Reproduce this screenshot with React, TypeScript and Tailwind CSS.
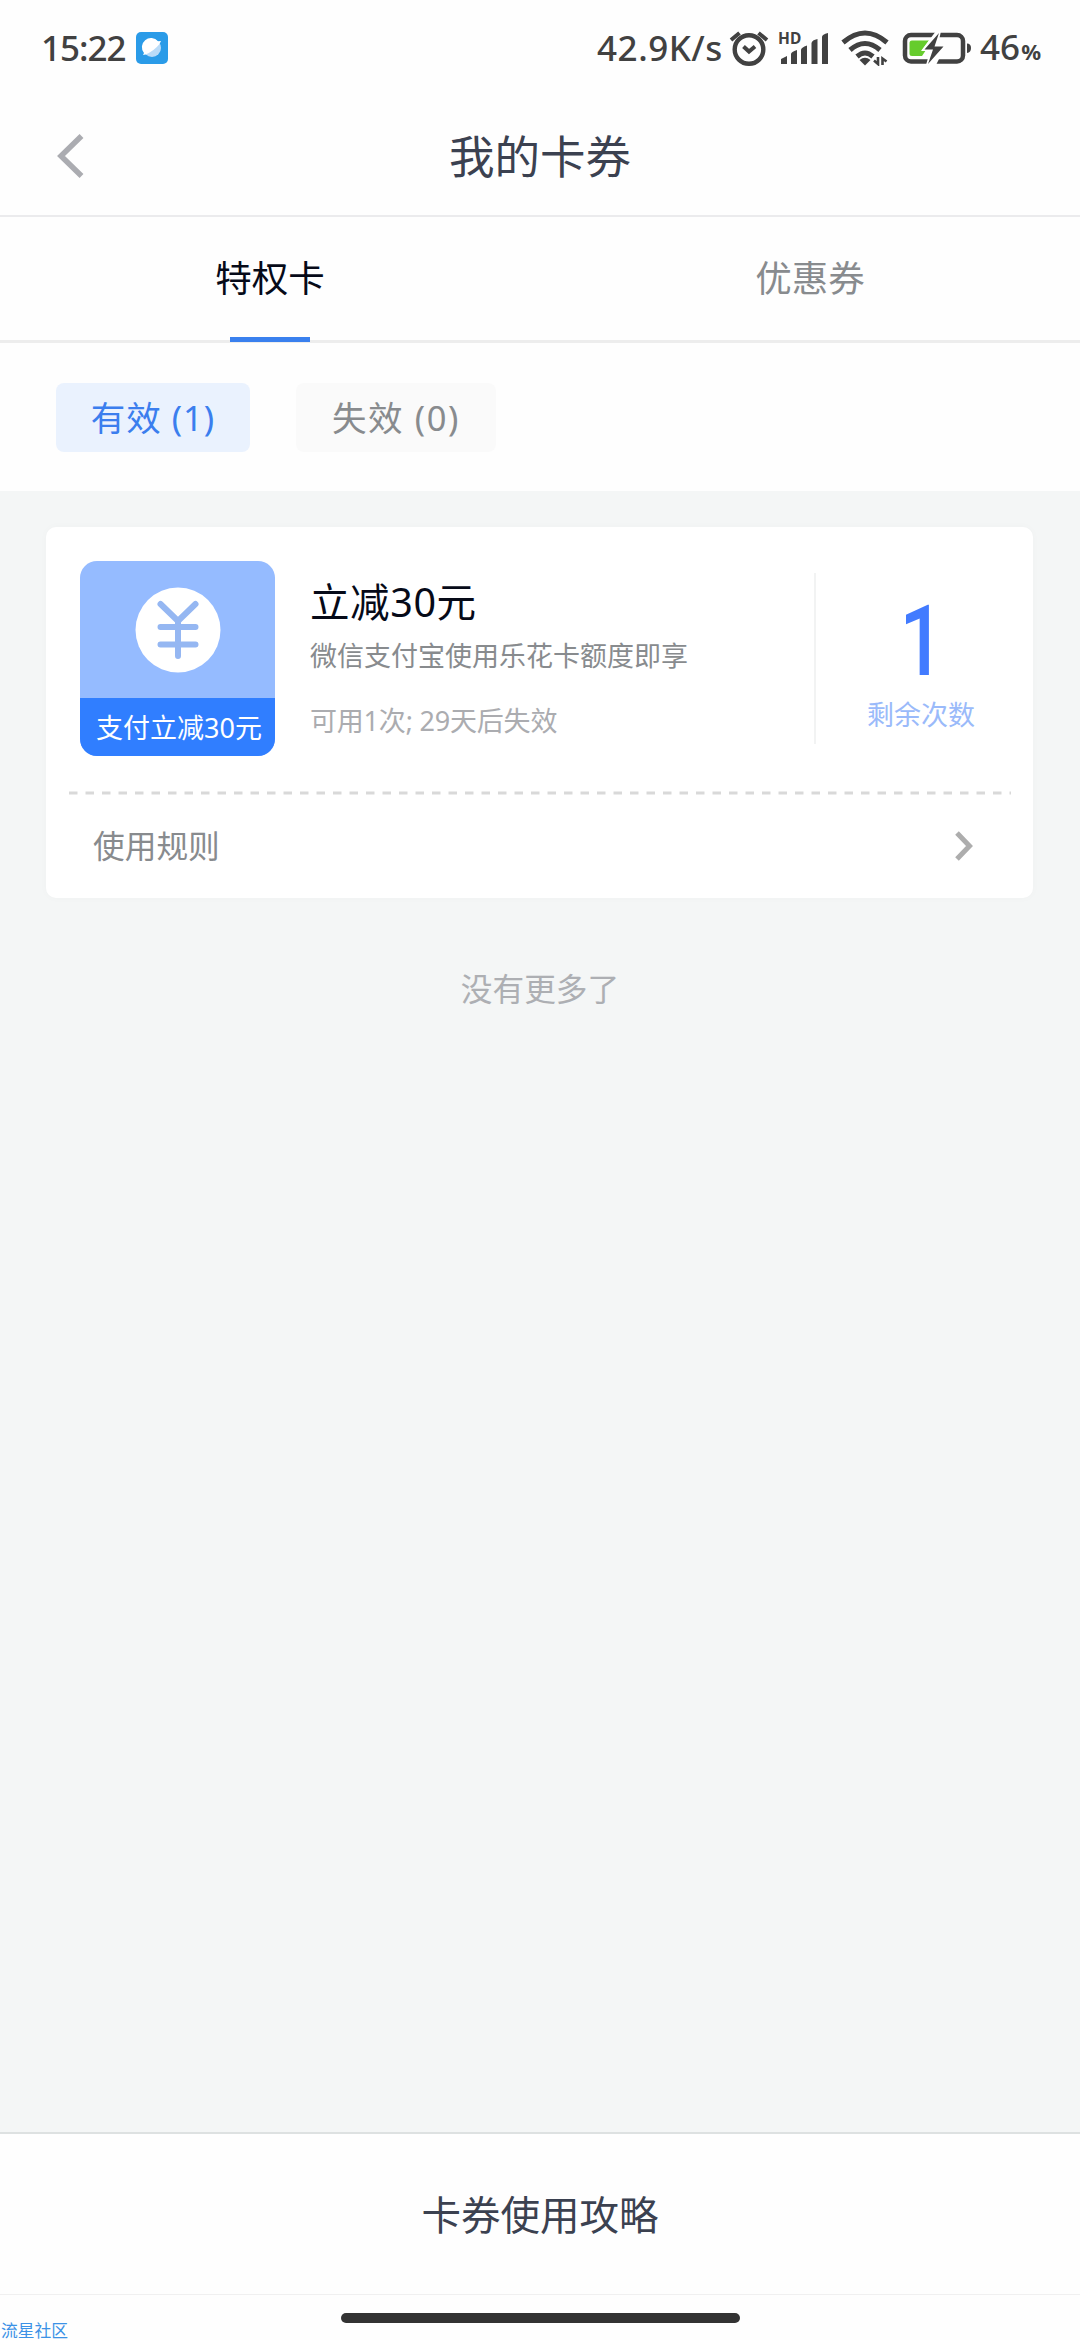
import React from "react";

const cjk = "font-['Noto_Sans','Noto_Sans_CJK_SC',sans-serif]";

function StatusBar() {
  return (
    <div className="flex h-[96px] items-center pl-[41px] pr-[40px] text-[#414141] font-['Noto_Sans',sans-serif] font-medium">
      <span className="w-[95px] whitespace-nowrap text-[35px] leading-[96px] tracking-[-1px]">15:22</span>
      <svg className="size-8 shrink-0" viewBox="0 0 32 32">
        <rect width="32" height="32" rx="5" fill="#2a9be8" />
        <circle cx="16" cy="16" r="9" fill="#b9dbf8" />
        <path d="M8 21A9 9 0 0 1 22 9.300L25 9L23.500 12Q18 19 9.500 22.500L7 23Z" fill="#fff" />
      </svg>
      <div className="ml-auto flex items-center">
        <span className="w-[132px] whitespace-nowrap text-[35px] leading-[98px] tracking-[0.5px]">42.9K/s</span>
        <svg className="h-[38px] w-[40px] shrink-0" viewBox="0 0 40 38" fill="none" stroke="#414141">
          <circle cx="20" cy="20.500" r="14.300" strokeWidth="4.400" />
          <path d="M2 11L10.500 4M38 11L29.500 4" strokeWidth="4" />
          <path d="M14.500 17.500L20 22.500L26 17.500" strokeWidth="4" />
        </svg>
        <div className="relative ml-[9px] h-[34px] w-[52px] shrink-0">
          <svg className="size-full" viewBox="0 0 52 34" fill="#414141">
            <path d="M3 28L9 25V33H3ZM13 23Q13 21 19 19V33H13ZM23 19Q23 16.500 29 14.500V33H23ZM33.500 12Q34 9 39.500 8V33H33.500ZM44 6Q44 3.500 50 2V33H44Z" />
          </svg>
          <span className="absolute -top-[3px] left-0 text-[15.500px] font-bold leading-[20px]">HD</span>
        </div>
        <svg className="ml-[11px] h-[36px] w-[48px] shrink-0" viewBox="0 0 48 36" fill="none" stroke="#414141">
          <path d="M2 12.500Q24 -6.500 46 12.500M9 20Q24 7 39 20M16 26.500Q24 19.500 32 26.500" strokeWidth="5" />
          <path d="M18.500 30Q24 25.500 29.500 30L24 35.500Z" fill="#414141" stroke="none" />
          <path d="M33 30.500L37 34V27M41.500 35V28.500L45.500 31.500" strokeWidth="2.600" />
        </svg>
        <svg className="ml-[13px] h-[34px] w-[70px] shrink-0" viewBox="0 0 70 34">
          <rect x="3" y="4" width="58" height="26.500" rx="6" fill="none" stroke="#414141" strokeWidth="4.500" />
          <path d="M10 9.500H27L20 19H24L20 25H10Q7.500 25 7.500 22.500V12Q7.500 9.500 10 9.500Z" fill="#66cc2d" />
          <path d="M34 0L19 20H28L24 34H34L44 14H36L39 0Z" fill="#fff" />
          <path d="M37 2L22.500 18.500H31L26 33L41.500 15.500H32.500Z" fill="#414141" />
          <path d="M65 12.500Q69 12.500 69 17T65 22Z" fill="#414141" />
        </svg>
        <span className="ml-[8px] whitespace-nowrap pt-[2px] text-[35px] leading-[96px]">
          46<span className="ml-px text-[22px] font-bold tracking-[-1px]">%</span>
        </span>
      </div>
    </div>
  );
}

function Header() {
  return (
    <header className="grid h-[121px] grid-cols-[1fr_auto_1fr] items-center border-b-2 border-[#ebebed]">
      <svg className="ml-[57px] h-[44px] w-[28px]" viewBox="0 0 28 44" fill="none">
        <path d="M24.500 2L4 22L24.500 42" stroke="#abacb1" strokeWidth="5.500" />
      </svg>
      <h1 className="text-[45.500px] leading-[118px] text-[#3b4150]">我的卡券</h1>
    </header>
  );
}

function Tabs() {
  return (
    <nav className="grid h-[126px] grid-cols-2 border-b-[3px] border-[#ededed] text-[36.500px] leading-[122px]">
      <div className="flex flex-col items-center text-[#060a18]">
        <span className="h-[120px]">特权卡</span>
        <span className="h-[5px] w-[80px] shrink-0 bg-[#3a80ee]" />
      </div>
      <div className="text-center text-[#888b8e]">优惠券</div>
    </nav>
  );
}

function Filters() {
  return (
    <div className="flex h-[148px] gap-[46px] pl-[56px] pt-[40px] text-[34.500px] leading-[69px]">
      <button className="h-[69px] w-[194px] rounded-[8px] bg-[#eaf2fe] tracking-[1px] text-[#3b7eee]">有效 (1)</button>
      <button className="h-[69px] w-[200px] rounded-[8px] bg-[#fafafa] tracking-[1.6px] text-[#888b8e]">失效 (0)</button>
    </div>
  );
}

function CouponBadge() {
  return (
    <div className="flex size-[195px] shrink-0 flex-col overflow-hidden rounded-[17px] bg-[#95bbff]">
      <div className="flex h-[137px] shrink-0 items-center justify-center">
        <svg className="size-[86px]" viewBox="0 0 86 86">
          <circle cx="43" cy="43" r="42.500" fill="#fff" />
          <path
            d="M25.500 17L43 34L60.500 17M43 34V69M25.500 40H60.500M25.500 57.500H60.500"
            fill="none"
            stroke="#95b7f2"
            strokeWidth="6"
            strokeLinecap="round"
          />
        </svg>
      </div>
      <div className="h-[58px] shrink-0 whitespace-nowrap bg-[#307eff] pl-[3px] text-center text-[27px] leading-[60px] text-white">支付立减30元</div>
    </div>
  );
}

function CouponCard() {
  return (
    <section className="ml-[46px] h-[371px] w-[987px] rounded-[10px] bg-white shadow-[0_0_8px_rgba(0,0,0,0.025)]">
      <div className="flex h-[264px] pl-[34px] pt-[34px]">
        <CouponBadge />
        <div className="ml-[35px] w-[504px] whitespace-nowrap">
          <div className="mt-[14px] text-[39.500px] leading-[54px] tracking-[0.6px] text-[#060a18]">立减30元</div>
          <div className="mt-[9px] text-[27px] leading-[36px] text-[#888b8e]">微信支付宝使用乐花卡额度即享</div>
          <div className="mt-[29px] text-[27px] leading-[36px] tracking-[-0.2px] text-[#abacb0]">可用1次; 29天后失效</div>
        </div>
        <div className="mt-[12px] h-[171px] w-[2px] bg-[#f2f3f3]" />
        <div className="flex w-[210px] flex-col items-center text-[#427bff]">
          <span className="mt-[31px] h-[98px] translate-x-px scale-x-[0.8] font-['Roboto',sans-serif] text-[98px] font-medium leading-[100px]">1</span>
          <span className="mt-[7px] text-[27px] leading-[36px] text-[#9abafa]">剩余次数</span>
        </div>
      </div>
      <svg className="ml-[23px] block h-[4px] w-[942px]" viewBox="0 0 942 4">
        <path d="M0 2H942" stroke="#d9d9d9" strokeWidth="3" strokeDasharray="8.500 8" />
      </svg>
      <div className="flex h-[101px] items-center justify-between pl-[47px] pr-[59px]">
        <span className="text-[31.700px] leading-[44px] text-[#888b8e]">使用规则</span>
        <svg className="h-[30px] w-[20px]" viewBox="0 0 20 30" fill="none">
          <path d="M3 2L15.500 15L3 28" stroke="#adadad" strokeWidth="5" />
        </svg>
      </div>
    </section>
  );
}

export default function App() {
  return (
    <div className={`flex h-[2340px] w-[1080px] flex-col overflow-hidden bg-[#fefefe] ${cjk}`} lang="zh-CN">
      <StatusBar />
      <Header />
      <Tabs />
      <Filters />
      <main className="flex-1 bg-[#f4f6f6] pt-[36px]">
        <CouponCard />
        <p className="mt-[69px] text-center text-[31.700px] leading-[44px] text-[#adafb3]">没有更多了</p>
      </main>
      <footer className="relative h-[208px] shrink-0 border-t-2 border-[#dde1e1]">
        <div className="h-[161px] border-b border-[#f0f0f0] text-center text-[39.500px] leading-[163px] text-[#3b4150]">卡券使用攻略</div>
        <div className="mx-auto mt-[18px] h-[10px] w-[399px] rounded-full bg-[#333]" />
        <span className="absolute bottom-0 left-[1px] text-[16.800px] leading-[18px] text-[#3c92e6]">流星社区</span>
      </footer>
    </div>
  );
}
